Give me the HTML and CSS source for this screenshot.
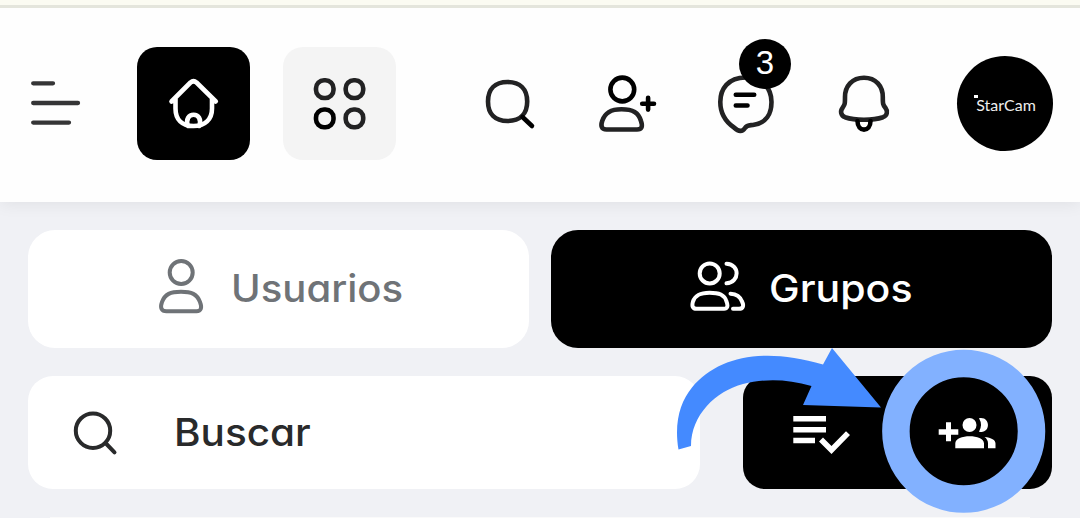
FILE: index.html
```html
<!DOCTYPE html>
<html lang="es">
<head>
<meta charset="utf-8">
<title>StarCam</title>
<link rel="stylesheet" href="styles.css">
</head>
<body>
<header class="topbar">
  <svg class="icon menu" width="50" height="65" viewBox="31 71 50 65"><path d="M33.2 83.3H53M33.2 103H78M33.2 122.6H69"/></svg>
  <a class="tile home"><svg class="icon" width="54" height="65" viewBox="167 71 54 65"><path d="M171.500 101.500L190.500 82.500Q193.500 80 196.500 82.500L215.800 101.500M175.500 98V108.500C175.500 119.500 182 126 193.500 126S212 119.500 212 108.500V98M188 126C185.500 119 189 114.800 193.600 114.800S201.700 119 199.200 126"/></svg></a>
  <a class="tile apps"><svg class="icon" width="54" height="65" viewBox="313 71 54 65"><rect x="316" y="80.200" width="17.500" height="17.800" rx="8"/><rect x="345.700" y="80.200" width="17.500" height="17.800" rx="8"/><rect class="dark" x="316" y="109.500" width="17.500" height="17.800" rx="8"/><rect x="345.700" y="109.500" width="17.500" height="17.800" rx="8"/></svg></a>
  <svg class="icon find" width="52" height="65" viewBox="484 71 52 65"><path d="M507.500 82C520 82 527.200 89 527.200 101.500S520 121 507.500 121S488 114 488 101.500S495 82 507.500 82Z"/><path class="dark" d="M522.500 117L532 126"/></svg>
  <svg class="icon friend" width="60" height="65" viewBox="598 71 60 65"><circle class="dark" cx="622.300" cy="89.500" r="11.900"/><path d="M621.500 109.300C633 109.300 638.500 112.500 641 121C643 127 641.500 129.500 637 129.500H606.500C601.500 129.500 600.500 126 602.200 121C605 112.500 611 109.300 621.500 109.300Z"/><path class="dark" d="M642.200 103.700H654M648.100 97.800V109.600"/></svg>
  <div class="messages">
    <svg class="icon" width="62" height="65" viewBox="715 71 62 65"><path d="M745.500 77.500C728 77.500 720.300 89 720.300 102C720.300 114 726 122 734 127.500Q741 134 745 128C747 124.500 750 125.500 754 124.800C766 123 771.500 114 771.500 102C771.500 88 762 77.500 745.500 77.500Z"/><path class="dark" d="M735.800 94.700H754.200M735.800 105.500H747.500"/></svg>
    <span class="badge">3</span>
  </div>
  <svg class="icon bell" width="54" height="65" viewBox="837 71 54 65"><path d="M864 77.700C852 77.700 845 86.500 845 97C845 104.500 844.800 104.500 842.500 108C840 111 840.800 115.500 845 117.200C855 120.600 873 120.600 883 117.200C887.500 115.500 887.800 111 885.500 108C883 104.500 882.800 104.500 882.800 97C882.800 86.500 876 77.700 864 77.700Z"/><path class="dark" d="M857.500 121C857.500 132.500 870.500 132.500 870.500 121"/></svg>
  <a class="avatar"><span class="brand">StarCam</span></a>
</header>

<main class="content">
  <nav class="tabs">
    <a class="tab">
      <svg class="icon" width="46" height="60" viewBox="158 259 46 60"><circle cx="181.200" cy="272.500" r="11.500"/><path d="M181 291.800C191.500 291.800 197 294 200 302C202.300 308 201 311.300 196.500 311.300H166.500C161.500 311.300 159.800 308 162 302C165 294 170.500 291.800 181 291.800Z"/></svg>
      <span class="label users">Usuarios</span>
    </a>
    <a class="tab active">
      <svg class="icon" width="57" height="60" viewBox="690 259 57 60"><circle cx="709.700" cy="273.400" r="10"/><path d="M709.500 292.700C719 292.700 724.500 294.500 726.500 301.500C728.500 306.500 727 308.800 724 308.800H696.500C693 308.800 691.500 306.500 693 301.500C695.500 294.500 701 292.700 709.500 292.700Z"/><path d="M726.500 263.700C740 264 740 282.500 726.500 283.300M730.500 293.700C736 294 740 296 742 301.500C744.500 306.500 742.500 308.800 739 308.800H733"/></svg>
      <span class="label groups">Grupos</span>
    </a>
  </nav>
  <div class="tools">
    <label class="search">
      <svg class="icon" width="46" height="46" viewBox="73 410 46 46"><circle cx="93" cy="430.700" r="17.200"/><path d="M105.500 443L114.500 452.300"/></svg>
      <span class="label query">Buscar</span>
    </label>
    <div class="actions">
      <svg class="solid select" width="60" height="42" viewBox="792 412 60 42"><path d="M793.300 416H826v5.500H793.300zM793.300 427H826v5.500H793.300zM793.300 437.700H815v5.500H793.300zM823 437.500L831.500 446L846 431.300L850 435L831.500 454L819 441.500z"/></svg>
      <svg class="solid add" width="60" height="42" viewBox="938 412 60 42"><path d="M946 422.300h5v7h7.300v5.500H951v6.500h-5v-6.500h-7.300v-5.500H946z"/><circle cx="969.500" cy="425" r="7"/><path d="M955.300 448.200V443.500C955.300 433.800 984 433.800 984 443.500V448.200zM979 418.300C991 416 991 434.500 979 431.700Q983 425 979 418.300zM984.500 437C991.500 437.800 995.500 440 995.500 443.500V448.200H988V443.500Q988 439.500 984.500 437z"/></svg>
    </div>
  </div>
  <section class="list"></section>
</main>

<svg class="annotation" width="1080" height="518" viewBox="0 0 1080 518">
  <path class="arrow" d="M678.500 449.500C674 423 680 402 692 387.500C718 356 764 347 823 364.500L832 348L881 407.500L803 405L811.500 386C787 379 765 378.500 743 384C716 391 691 415 691 446Z"/>
  <circle class="ring" cx="963.700" cy="431.300" r="67.800"/>
</svg>
</body>
</html>
```
FILE: styles.css
```css
* { box-sizing: border-box; }
body {
  margin: 0;
  width: 1080px;
  height: 518px;
  overflow: hidden;
  position: relative;
  background: #f0f1f5;
  font-family: Inter, "Liberation Sans", sans-serif;
}
svg { display: block; flex: none; }
.icon {
  fill: none;
  stroke: #222223;
  stroke-width: 4.6;
  stroke-linecap: round;
  stroke-linejoin: round;
}
.dark { stroke: #000; }

.topbar {
  position: relative;
  display: flex;
  align-items: center;
  height: 202px;
  padding: 8px 27px 3px 31px;
  background: linear-gradient(#fbfbf2 0 5px, #e4e5dc 5px 8px, #fefefe 8px);
  box-shadow: 0 2px 16px rgba(0, 0, 0, .07);
}
.menu { stroke: #353536; stroke-width: 4.3; }
.tile {
  display: flex;
  flex: none;
  align-items: center;
  justify-content: center;
  width: 113px;
  height: 113px;
  border-radius: 20px;
}
.home { margin-left: 56px; background: #000; }
.home .icon { stroke: #fff; }
.apps { margin-left: 33px; background: #f4f4f4; }
.find { margin-left: 88px; }
.friend { margin-left: 62px; }
.messages { position: relative; flex: none; margin-left: 57px; }
.badge {
  position: absolute;
  left: 24px;
  top: -32px;
  width: 52px;
  height: 50px;
  border-radius: 50%;
  background: #000;
  color: #fff;
  font: 33px/47px "Liberation Sans", sans-serif;
  text-align: center;
}
.bell { margin-left: 60px; }
.avatar {
  display: flex;
  flex: none;
  align-items: center;
  justify-content: center;
  width: 96px;
  height: 95px;
  margin-left: 66px;
  border-radius: 50%;
  background: #000;
}
.brand {
  position: relative;
  padding: 2px 0 0 2px;
  color: #eee;
  font: 16px/20px Lato, sans-serif;
}
.brand::before {
  content: "";
  position: absolute;
  left: 0;
  top: 2px;
  width: 4px;
  height: 3px;
  background: #fff;
}

.content {
  display: grid;
  align-content: start;
  row-gap: 28px;
  height: 316px;
  padding: 28px 28px 0;
  overflow: hidden;
}
.tabs {
  display: grid;
  grid-template-columns: 1fr 1fr;
  column-gap: 22px;
}
.tab {
  display: flex;
  align-items: center;
  height: 118px;
  padding-left: 130px;
  border-radius: 27px;
  background: #fff;
  color: #6f7377;
}
.tab .icon { stroke: #6f7377; stroke-width: 4; }
.tab.active { padding-left: 139px; background: #000; color: #fff; }
.tab.active .icon { stroke: #fff; }
.label {
  padding-bottom: 2px;
  font-size: 38px;
  line-height: 48px;
  font-weight: 500;
  font-feature-settings: "cv11";
  white-space: nowrap;
  transform-origin: left;
}
.users { margin-left: 26.500px; transform: scaleX(1.055); }
.groups { margin-left: 21.500px; transform: scaleX(1.08); }
.tools { display: flex; gap: 43px; }
.search {
  display: flex;
  align-items: center;
  width: 672px;
  height: 113px;
  padding-left: 45px;
  border-radius: 25px;
  background: #fff;
  color: #292a2b;
}
.search .icon { stroke: #292a2b; stroke-width: 4; }
.query { margin-left: 54.500px; transform: scaleX(1.065); }
.actions {
  display: flex;
  flex: 1;
  align-items: center;
  padding-left: 49px;
  border-radius: 22px;
  background: #000;
}
.solid { fill: #fff; }
.add { margin-left: 86px; }
.list {
  height: 1px;
  margin: 0 22px;
  background: #fafafa;
}
.annotation { position: absolute; left: 0; top: 0; pointer-events: none; }
.arrow { fill: #448aff; }
.ring { fill: none; stroke: #82b1ff; stroke-width: 27.5; }
```
